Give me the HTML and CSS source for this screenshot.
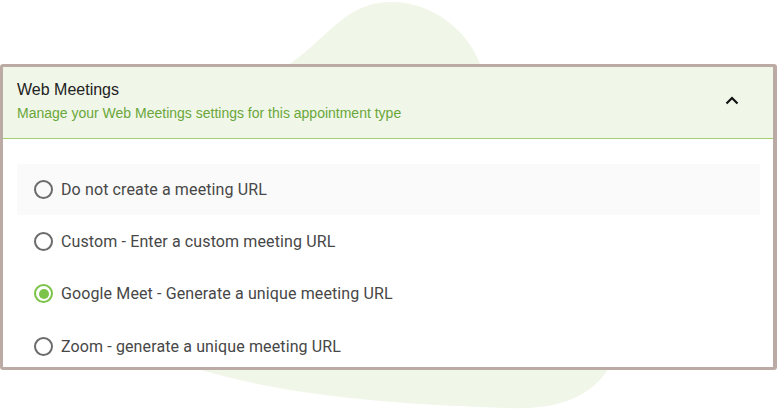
FILE: index.html
```html
<!DOCTYPE html>
<html>
<head>
<meta charset="utf-8">
<link rel="stylesheet" href="styles.css">
</head>
<body>
<div class="stage">
  <svg class="blob" width="777" height="410" viewBox="0 0 777 410" aria-hidden="true">
    <path d="M 290 64 C 330 35, 345 4, 388 2 C 430 0, 468 30, 480 64 L 610 366 C 592 398, 555 410, 510 408 C 440 405, 300 402, 188 366 Z" fill="#f0f6e8"/>
  </svg>
  <section class="card">
    <header class="card-head">
      <div class="head-text">
        <div class="title">Web Meetings</div>
        <div class="subtitle">Manage your Web Meetings settings for this appointment type</div>
      </div>
      <svg class="chevron" width="14" height="9" viewBox="0 0 14 9" aria-hidden="true">
        <path d="M1.5 7.5 L7 2 L12.5 7.5" fill="none" stroke="#111" stroke-width="2.2"/>
      </svg>
    </header>
    <div class="card-body">
      <label class="option hover"><span class="radio"></span><span class="label">Do not create a meeting URL</span></label>
      <label class="option"><span class="radio"></span><span class="label">Custom - Enter a custom meeting URL</span></label>
      <label class="option"><span class="radio checked"></span><span class="label">Google Meet - Generate a unique meeting URL</span></label>
      <label class="option"><span class="radio"></span><span class="label">Zoom - generate a unique meeting URL</span></label>
    </div>
  </section>
</div>
</body>
</html>
```
FILE: styles.css
```css
html, body {
  margin: 0;
  padding: 0;
  background: #ffffff;
}
.stage {
  position: relative;
  width: 777px;
  height: 410px;
  overflow: hidden;
  padding-top: 64px;
  box-sizing: border-box;
}
.blob {
  position: absolute;
  left: 0;
  top: 0;
  z-index: 0;
}
.card {
  position: relative;
  z-index: 1;
  width: 777px;
  height: 306px;
  box-sizing: border-box;
  border: 3px solid #bcaba5;
  border-right-width: 4px;
  border-radius: 3px;
  background: #ffffff;
  overflow: hidden;
}
.card-head {
  display: flex;
  align-items: center;
  justify-content: space-between;
  background: #f0f6e8;
  border-bottom: 1px solid #a3cf72;
  padding: 12px 34px 16px 14px;
  box-sizing: content-box;
  height: 43px;
}
.title {
  font-family: "Liberation Sans", Arial, sans-serif;
  font-size: 16px;
  line-height: 20px;
  margin-top: 1px;
  color: #222222;
}
.subtitle {
  font-family: "Liberation Sans", Arial, sans-serif;
  font-size: 14px;
  line-height: 20px;
  margin-top: 3px;
  color: #6aa73a;
}
.chevron {
  display: block;
  margin-top: -1px;
}
.card-body {
  padding: 25px 13px 0 14px;
  display: flex;
  flex-direction: column;
}
.option {
  display: flex;
  align-items: center;
  flex: none;
  height: 52.5px;
  padding-left: 17px;
  gap: 8px;
  font-family: Roboto, "Liberation Sans", sans-serif;
  font-size: 16px;
  letter-spacing: 0.12px;
  color: #474747;
}
.option.hover {
  background: #fafafa;
  height: 51px;
}
.radio {
  width: 19px;
  height: 19px;
  box-sizing: border-box;
  border: 2px solid #6b6b6b;
  border-radius: 50%;
  position: relative;
  flex: none;
}
.radio.checked {
  border-color: #7cc34a;
}
.radio.checked::after {
  content: "";
  position: absolute;
  left: 2.5px;
  top: 2.5px;
  width: 10px;
  height: 10px;
  border-radius: 50%;
  background: #7cc34a;
}
```
